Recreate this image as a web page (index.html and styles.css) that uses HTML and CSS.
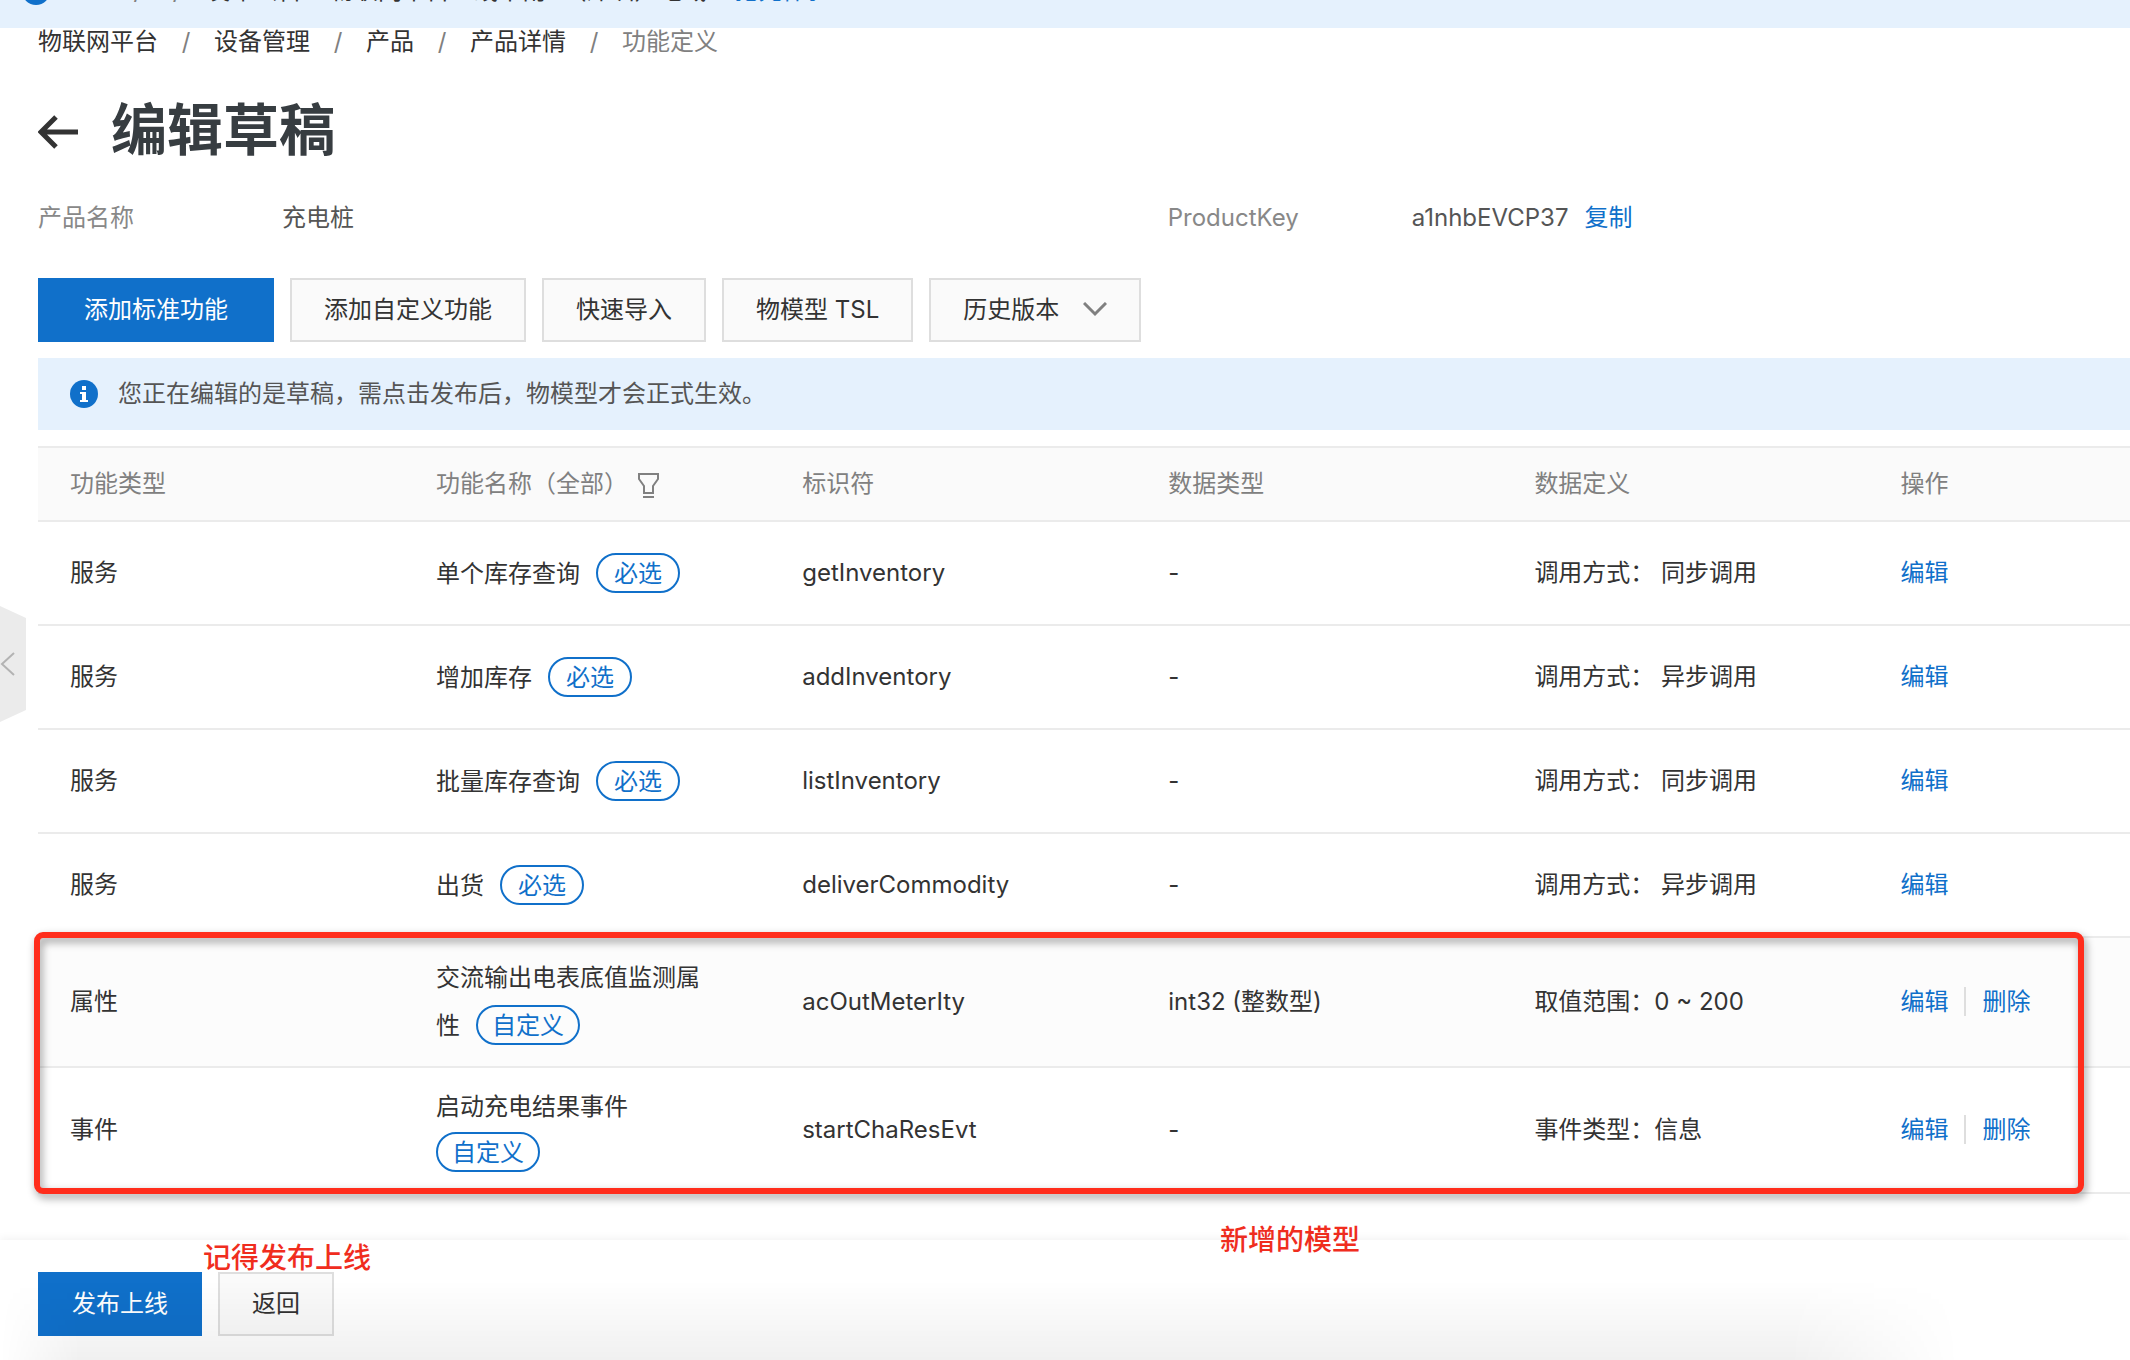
FILE: index.html
```html
<!DOCTYPE html>
<html lang="zh-CN">
<head>
    <meta charset="UTF-8">
    <meta name="viewport" content="width=device-width, initial-scale=1.0">
    <title>编辑草稿</title>
    <link rel="stylesheet" href="styles.css">
</head>
<body>
    <div class="banner">
        <svg class="info-icon" viewBox="0 0 28 28"><circle cx="14" cy="14" r="14"/><path d="M12 6h4v4h-4zM10 12h6v8h2v2h-8v-2h2v-6h-2z"/></svg>
        <span class="banner-date">2020/04/08</span>
        <span class="banner-type">发布公告</span>
        <span>物联网平台上线华南1 （深圳）地域</span>
        <a href="#">抢先体验</a>
    </div>

    <button class="collapse" aria-label="收起">
        <svg width="16" height="24" viewBox="0 0 16 24"><path d="M14 1 2 12l12 11"/></svg>
    </button>

    <main>
        <nav class="breadcrumb">
            <a href="#">物联网平台</a><span class="slash">/</span>
            <a href="#">设备管理</a><span class="slash">/</span>
            <a href="#">产品</a><span class="slash">/</span>
            <a href="#">产品详情</a><span class="slash">/</span>
            <span class="current">功能定义</span>
        </nav>

        <div class="title">
            <a href="#" aria-label="返回">
                <svg width="41" height="38" viewBox="0 0 41 38"><path d="M18 6 3 21l15 15M3 21h37"/></svg>
            </a>
            <h1>编辑草稿</h1>
        </div>

        <dl class="info">
            <div class="info-item"><dt>产品名称</dt><dd>充电桩</dd></div>
            <div class="info-item"><dt>ProductKey</dt><dd>a1nhbEVCP37<a href="#">复制</a></dd></div>
        </dl>

        <div class="toolbar">
            <button class="btn primary wide">添加标准功能</button>
            <button class="btn">添加自定义功能</button>
            <button class="btn">快速导入</button>
            <button class="btn">物模型 TSL</button>
            <button class="btn">历史版本
                <svg width="24" height="16" viewBox="0 0 24 16"><path d="m1 1 11 11L23 1"/></svg>
            </button>
        </div>

        <div class="notice">
            <svg class="info-icon" viewBox="0 0 28 28"><circle cx="14" cy="14" r="14"/><path d="M12 6h4v4h-4zM10 12h6v8h2v2h-8v-2h2v-6h-2z"/></svg>
            <span>您正在编辑的是草稿，需点击发布后，物模型才会正式生效。</span>
        </div>

        <div class="table-wrap">
            <table>
                <thead>
                    <tr>
                        <th>功能类型</th>
                        <th>功能名称（全部）<svg class="filter" width="22" height="26" viewBox="0 0 22 26"><path d="M1 2h19v5l-5 7v7H6v-7L1 7zM5 25h11"/></svg></th>
                        <th>标识符</th>
                        <th>数据类型</th>
                        <th>数据定义</th>
                        <th class="ops">操作</th>
                    </tr>
                </thead>
                <tbody>
                    <tr>
                        <td>服务</td>
                        <td>单个库存查询<span class="tag">必选</span></td>
                        <td>getInventory</td>
                        <td>-</td>
                        <td>调用方式： 同步调用</td>
                        <td class="ops"><a href="#">编辑</a></td>
                    </tr>
                    <tr>
                        <td>服务</td>
                        <td>增加库存<span class="tag">必选</span></td>
                        <td>addInventory</td>
                        <td>-</td>
                        <td>调用方式： 异步调用</td>
                        <td class="ops"><a href="#">编辑</a></td>
                    </tr>
                    <tr>
                        <td>服务</td>
                        <td>批量库存查询<span class="tag">必选</span></td>
                        <td>listInventory</td>
                        <td>-</td>
                        <td>调用方式： 同步调用</td>
                        <td class="ops"><a href="#">编辑</a></td>
                    </tr>
                    <tr>
                        <td>服务</td>
                        <td>出货<span class="tag">必选</span></td>
                        <td>deliverCommodity</td>
                        <td>-</td>
                        <td>调用方式： 异步调用</td>
                        <td class="ops"><a href="#">编辑</a></td>
                    </tr>
                    <tr class="hover">
                        <td>属性</td>
                        <td class="two-line">交流输出电表底值监测属性<span class="tag custom">自定义</span></td>
                        <td>acOutMeterIty</td>
                        <td>int32 (整数型)</td>
                        <td>取值范围：0 ~ 200</td>
                        <td class="ops"><a href="#">编辑</a><a href="#">删除</a></td>
                    </tr>
                    <tr>
                        <td>事件</td>
                        <td class="two-line tight">启动充电结果事件<br><span class="tag custom first">自定义</span></td>
                        <td>startChaResEvt</td>
                        <td>-</td>
                        <td>事件类型：信息</td>
                        <td class="ops"><a href="#">编辑</a><a href="#">删除</a></td>
                    </tr>
                </tbody>
            </table>
            <div class="mark-box"></div>
            <div class="mark mark-model">新增的模型</div>
        </div>
    </main>

    <footer>
        <button class="btn primary">发布上线</button>
        <button class="btn">返回</button>
        <div class="mark mark-publish">记得发布上线</div>
    </footer>
</body>
</html>
```

FILE: styles.css
```css
* {
    box-sizing: border-box;
}

body {
    position: relative;
    display: flex;
    flex-direction: column;
    min-height: 100vh;
    margin: 0;
    background: #fff;
    color: #333;
    font-family: Inter, "Noto Sans CJK SC", sans-serif;
    font-size: 24px;
    line-height: 36px;
}

a {
    color: #1070ca;
    text-decoration: none;
}

svg {
    flex: none;
    fill: none;
    stroke: #808080;
    stroke-width: 2;
}

.info-icon {
    width: 28px;
    height: 28px;
    stroke: none;
}

.info-icon circle {
    fill: #1070ca;
}

.info-icon path {
    fill: #fff;
}

/* announcement bar, scrolled almost out of view */
.banner {
    display: flex;
    align-items: flex-end;
    height: 28px;
    padding: 0 22px 23px;
    overflow: hidden;
    background: #e5f1fd;
    line-height: 28px;
    white-space: nowrap;
}

.banner-date {
    width: 132px;
    margin-left: 24px;
    color: #808080;
    overflow: hidden;
}

.banner-type {
    margin-right: 28px;
}

.banner a {
    margin-left: 28px;
}

main {
    padding-left: 38px;
}

.breadcrumb {
    display: flex;
    line-height: 28px;
}

.breadcrumb a {
    color: #333;
}

.slash {
    width: 56px;
    color: #808080;
    text-align: center;
}

.current {
    color: #808080;
}

.title {
    display: flex;
    align-items: center;
    gap: 32px;
    margin-top: 38px;
}

.title a {
    display: flex;
}

.title svg {
    stroke: #333;
    stroke-width: 5;
}

h1 {
    margin: 0;
    color: #373d41;
    font-size: 56px;
    font-weight: 600;
    line-height: 72px;
}

.info {
    display: flex;
    margin: 34px 0 42px;
}

.info-item {
    display: flex;
    width: 54%;
}

.info-item + .info-item {
    width: 46%;
}

dt {
    width: 244px;
    color: #888;
}

dd {
    margin: 0;
    color: #555;
}

dd a {
    margin-left: 16px;
}

.toolbar {
    display: flex;
    gap: 16px;
}

.btn {
    display: flex;
    align-items: center;
    gap: 24px;
    height: 64px;
    padding: 0 32px;
    border: 2px solid #dedede;
    background: #fafafa;
    color: #333;
    font: inherit;
}

.btn.primary {
    border-color: #1070ca;
    background: #1070ca;
    color: #fff;
}

.btn.wide {
    padding: 0 44px;
}

.btn svg {
    stroke-width: 3;
}

.notice {
    display: flex;
    align-items: center;
    gap: 20px;
    height: 72px;
    margin: 16px 0;
    padding: 0 32px;
    background: #e5f1fd;
    color: #555;
}

.table-wrap {
    position: relative;
}

table {
    width: 100%;
    border-collapse: separate;
    border-spacing: 0;
    table-layout: fixed;
}

th {
    width: 17.5%;
    height: 76px;
    padding: 0 0 0 32px;
    border-top: 2px solid #ebebeb;
    border-bottom: 2px solid #ebebeb;
    background: #fafafa;
    color: #808080;
    font-weight: 400;
    text-align: left;
}

th.ops {
    width: 12.5%;
}

td {
    height: 104px;
    padding: 0 32px;
    border-bottom: 2px solid #ebebeb;
}

td.ops {
    padding-right: 0;
}

.hover td {
    background: #fcfcfc;
}

.filter {
    margin-left: 10px;
    vertical-align: middle;
}

.tag {
    display: inline-block;
    height: 40px;
    margin-left: 16px;
    padding: 0 16px;
    border: 2px solid #1070ca;
    border-radius: 20px;
    color: #1070ca;
    line-height: 38px;
}

.tag.custom {
    padding: 0 14px;
}

.tag.first {
    margin-left: 0;
}

.two-line {
    padding: 16px 48px 16px 32px;
    line-height: 48px;
}

.two-line.tight {
    line-height: 46px;
}

.ops a + a {
    margin-left: 16px;
    padding-left: 16px;
    border-left: 2px solid #dedede;
}

/* red annotations */
.mark-box {
    position: absolute;
    right: 46px;
    bottom: 0;
    left: -4px;
    height: 262px;
    border: 6px solid #ff2d1c;
    border-radius: 9px;
    filter: drop-shadow(2px 4px 4px rgba(0, 0, 0, 0.4));
    pointer-events: none;
}

.mark {
    position: absolute;
    color: #f02d1e;
    font-size: 28px;
    font-weight: 500;
    line-height: 40px;
}

.mark-model {
    bottom: -66px;
    left: 1182px;
}

.mark-publish {
    top: -2px;
    left: 203px;
}

.collapse {
    position: absolute;
    top: 606px;
    left: 0;
    width: 26px;
    height: 116px;
    padding: 0;
    border: 0;
    background: #ebebeb;
    clip-path: polygon(0 0, 100% 12px, 100% 104px, 0 100%);
}

.collapse svg {
    display: block;
    stroke: #b3b3b3;
}

footer {
    position: relative;
    display: flex;
    gap: 16px;
    margin-top: auto;
    padding: 32px 38px 24px;
    box-shadow: 0 -2px 8px rgba(0, 0, 0, 0.05);
}

/* soft shade along the bottom edge of the window */
footer::after {
    content: "";
    position: absolute;
    inset: 40px 0 0;
    background: linear-gradient(rgba(0, 0, 0, 0), rgba(0, 0, 0, 0.06));
    mask-image: linear-gradient(90deg, transparent, #000 80px, #000 84%, transparent 92%);
    pointer-events: none;
}
```
